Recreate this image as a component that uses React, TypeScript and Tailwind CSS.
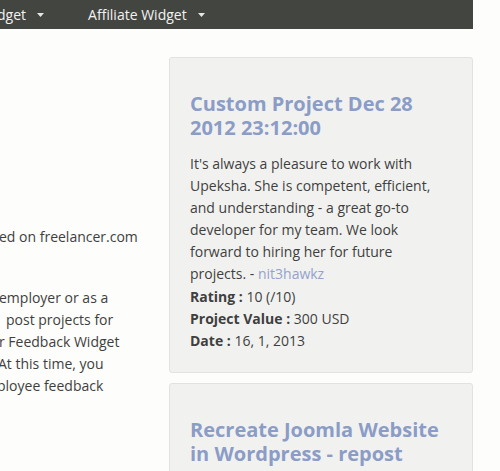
import React from "react";

const font = { fontFamily: '"Open Sans", "Noto Sans", sans-serif' };

function Caret() {
  return (
    <svg width="7" height="4" viewBox="0 0 7 4" className="ml-[11px] mt-[1px]">
      <path d="M0 0 L7 0 L3.5 4 Z" fill="#e6e6e6" />
    </svg>
  );
}

function Card({ title, children }: { title: string; children?: React.ReactNode }) {
  return (
    <div className="rounded-[3px] border border-[#e2e3df] bg-[#f1f2f0] px-[20px] pb-[20px] pt-[34px]">
      <h3 className="text-[20px] font-bold leading-[24px] text-[#8b9cc7]">{title}</h3>
      {children}
    </div>
  );
}

export default function App() {
  return (
    <div className="min-h-[471px] w-[500px] overflow-hidden bg-[#fdfdfb] text-[14px] leading-[22px] text-[#3f3f3f]" style={font}>
      <div className="flex h-[29px] w-[473px] items-center bg-[#434541] text-[14px] text-[#f2f2f2]">
        <div className="ml-[-3px] flex items-center">
          <span>dget</span>
          <Caret />
        </div>
        <div className="ml-[44px] flex items-center">
          <span>Affiliate Widget</span>
          <Caret />
        </div>
      </div>
      <div className="flex w-[473px] pt-[28px]">
        <div className="w-[169px] shrink-0 overflow-hidden pt-[169px]">
          <div className="ml-[-1px] whitespace-nowrap">ed on freelancer.com</div>
          <div className="mt-[39px] ml-[-1px] whitespace-nowrap">employer or as a</div>
          <div className="ml-[6px] whitespace-nowrap">post projects for</div>
          <div className="ml-[-1px] whitespace-nowrap">r Feedback Widget</div>
          <div className="ml-[-2px] whitespace-nowrap">At this time, you</div>
          <div className="ml-[-3px] whitespace-nowrap">ployee feedback</div>
        </div>
        <div className="flex w-[304px] shrink-0 flex-col gap-[10px]">
          <Card title="Custom Project Dec 28 2012 23:12:00">
            <p className="mt-[13px]">
              It's always a pleasure to work with Upeksha. She is competent, efficient, and understanding - a great go-to developer for my team. We look forward to hiring her for future projects. -{" "}
              <a className="text-[#94a1cc]">nit3hawkz</a>
            </p>
            <div className="mt-[1px]">
              <b>Rating :</b> 10 (/10)
            </div>
            <div>
              <b>Project Value :</b> 300 USD
            </div>
            <div>
              <b>Date :</b> 16, 1, 2013
            </div>
          </Card>
          <Card title="Recreate Joomla Website in Wordpress - repost">
            <p className="mt-[13px]">
              Great work. Fast, professional and competent. Would hire again.
            </p>
          </Card>
        </div>
      </div>
    </div>
  );
}
